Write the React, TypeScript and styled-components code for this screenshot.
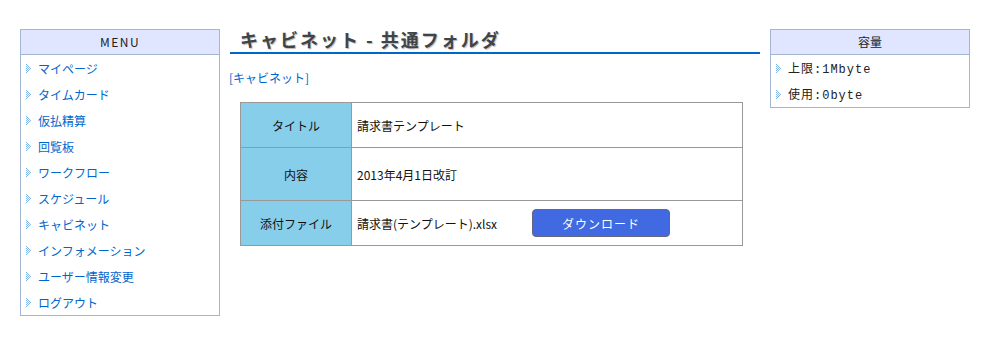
import React from 'react'
import styled, { createGlobalStyle } from 'styled-components'

const GlobalStyle = createGlobalStyle`
body{
    margin: 0;
    background: #fff;
    font-family: "Noto Sans CJK JP", "DejaVu Sans", sans-serif;
    font-size: 12px;
    color: #222;
}
`;

const menuItems = [
    'マイページ',
    'タイムカード',
    '仮払精算',
    '回覧板',
    'ワークフロー',
    'スケジュール',
    'キャビネット',
    'インフォメーション',
    'ユーザー情報変更',
    'ログアウト',
]

function Arrow() {
    const dots: [number, number][] = [
        [0, 0], [0, 2], [0, 4], [0, 6], [0, 8],
        [1, 1], [1, 3], [1, 5], [1, 7],
        [2, 2], [2, 4], [2, 6],
        [3, 3], [3, 5],
        [4, 4],
    ]
    return (
        <ArrowSvg width="6" height="9" viewBox="0 0 6 9">
            {dots.map(([x, y]) => (
                <rect key={x + '-' + y} x={x} y={y} width="1" height="1" fill="#7fb8ec" />
            ))}
        </ArrowSvg>
    )
}

function App() {
    return (
        <Container>
            <GlobalStyle />
            <SideBox>
                <BoxHead spaced>MENU</BoxHead>
                {menuItems.map((m) => (
                    <Item key={m}>
                        <Arrow />
                        <a href="#">{m}</a>
                    </Item>
                ))}
            </SideBox>

            <Main>
                <Title>キャビネット - 共通フォルダ</Title>
                <Crumb>[<a href="#">キャビネット</a>]</Crumb>
                <Table>
                    <tbody>
                        <Row h={45}>
                            <th>タイトル</th>
                            <td>請求書テンプレート</td>
                        </Row>
                        <Row h={53}>
                            <th>内容</th>
                            <td>2013年4月1日改訂</td>
                        </Row>
                        <Row h={45}>
                            <th>添付ファイル</th>
                            <td>
                                <FileCell>
                                    <span>請求書(テンプレート).xlsx</span>
                                    <DownloadButton>ダウンロード</DownloadButton>
                                </FileCell>
                            </td>
                        </Row>
                    </tbody>
                </Table>
            </Main>

            <SideBox>
                <BoxHead>容量</BoxHead>
                <Item plain>
                    <Arrow />
                    <span>上限:1Mbyte</span>
                </Item>
                <Item plain>
                    <Arrow />
                    <span>使用:0byte</span>
                </Item>
            </SideBox>
        </Container>
    )
}

export default App


const Container = styled.div`
display: flex;
align-items: flex-start;
gap: 10px;
padding: 29px 20px;
width: 1000px;
box-sizing: border-box;
`;

const SideBox = styled.div`
width: 200px;
box-sizing: border-box;
border: 1px solid #a3b5d3;
background: #fff;
`;

const BoxHead = styled.div<{ spaced?: boolean }>`
height: 24px;
line-height: 24px;
background: #e0e6ff;
border-bottom: 1px solid #a3b5d3;
text-align: center;
color: #222;
letter-spacing: ${(p) => (p.spaced ? '1.5px' : '0')};
`;

const Item = styled.div<{ plain?: boolean }>`
display: flex;
align-items: center;
gap: 6px;
height: 26px;
padding-left: 5px;
color: ${(p) => (p.plain ? '#222' : '#0066cc')};
font-family: ${(p) => (p.plain ? '"Liberation Mono", "Noto Sans CJK JP", monospace' : 'inherit')};
letter-spacing: ${(p) => (p.plain ? '1px' : '0')};
a{
    color: #0066cc;
    text-decoration: none;
}
`;

const ArrowSvg = styled.svg`
flex-shrink: 0;
`;

const Main = styled.div`
width: 530px;
display: flex;
flex-direction: column;
`;

const Title = styled.h1`
margin: 0;
padding: 0 0 4px 10px;
height: 19px;
font-size: 18px;
line-height: 20px;
font-weight: bold;
color: #404448;
text-shadow: 1px 1px 1px #b8b8b8;
border-bottom: 2px solid #0066cc;
letter-spacing: 2px;
`;

const Crumb = styled.div`
margin: 16px 0 0 -1px;
height: 16px;
line-height: 16px;
color: #0066cc;
a{
    color: #0066cc;
    text-decoration: none;
}
`;

const Table = styled.table`
margin: 16px 0 0 10px;
width: 503px;
border-collapse: collapse;
th, td{
    border: 1px solid #999;
    font-weight: normal;
    font-size: 12px;
    color: #111;
}
th{
    width: 108px;
    background: #87ceeb;
    text-align: center;
}
td{
    background: #fff;
    padding: 0 5px;
    text-align: left;
}
`;

const Row = styled.tr<{ h: number }>`
height: ${(p) => p.h}px;
`;

const FileCell = styled.div`
display: flex;
align-items: center;
gap: 35px;
`;

const DownloadButton = styled.button`
width: 138px;
height: 28px;
background: #4169e1;
color: #fff;
border: 1px solid #666680;
border-radius: 4px;
font-family: "Noto Sans CJK JP", sans-serif;
font-size: 12px;
letter-spacing: 1px;
`;
